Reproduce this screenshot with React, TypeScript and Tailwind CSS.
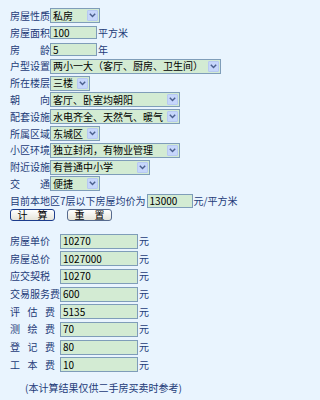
import React from "react";

const FONT = "font-['Noto_Sans_CJK_SC','Liberation_Sans',sans-serif]";

function Chevron() {
  return (
    <svg width="7" height="5" viewBox="0 0 7 5">
      <path d="M0.8 0.8 L3.5 3.6 L6.2 0.8" fill="none" stroke="#4a5f8c" strokeWidth="1.4" />
    </svg>
  );
}

function Sel({ value, className }: { value: string; className: string }) {
  return (
    <div className={`flex h-[15px] items-stretch border border-[#7f9db9] bg-[#d3ebd3] ${className}`}>
      <div className="flex flex-1 items-center overflow-hidden whitespace-nowrap pl-[2px] text-[10px] leading-none text-black">
        {value}
      </div>
      <div className="m-[1px] flex w-[11px] items-center justify-center rounded-[1px] border border-[#b7c9f2] bg-[#c6d6fb]">
        <Chevron />
      </div>
    </div>
  );
}

function Inp({ value, className }: { value: string; className: string }) {
  return (
    <div
      className={`flex items-center border border-[#7f9db9] bg-[#d3ebd3] pl-[2px] text-[10px] leading-none text-black ${className}`}
    >
      {value}
    </div>
  );
}

function Label({ text, spread }: { text: string; spread?: boolean }) {
  if (spread) {
    return (
      <div className="flex w-[40px] justify-between">
        {text.split("").map((c, i) => (
          <span key={i}>{c}</span>
        ))}
      </div>
    );
  }
  return <div className="w-[40px] whitespace-nowrap">{text}</div>;
}

function Row({ children }: { children: React.ReactNode }) {
  return <div className="flex h-[16.8px] items-center">{children}</div>;
}

function RLabel({ text, spread }: { text: string; spread?: boolean }) {
  if (spread) {
    return (
      <div className="w-[50px]">
        <div className="flex w-[45px] justify-between">
          {text.split("").map((c, i) => (
            <span key={i}>{c}</span>
          ))}
        </div>
      </div>
    );
  }
  return <div className="w-[50px] whitespace-nowrap">{text}</div>;
}

function RRow({ label, value, spread }: { label: string; value: string; spread?: boolean }) {
  return (
    <div className="flex h-[17.7px] items-center">
      <RLabel text={label} spread={spread} />
      <Inp value={value} className="h-[15px] w-[78px]" />
      <span className="ml-[1px]">元</span>
    </div>
  );
}

export default function App() {
  return (
    <div
      className={`min-h-screen w-full bg-[#e9f4fe] pl-[10px] pt-[7.6px] text-[10px] leading-none text-[#1d3b78] ${FONT}`}
    >
      <Row>
        <Label text="房屋性质" />
        <Sel value="私房" className="w-[50px]" />
      </Row>
      <Row>
        <Label text="房屋面积" />
        <Inp value="100" className="h-[13px] w-[47px]" />
        <span className="ml-[1px]">平方米</span>
      </Row>
      <Row>
        <Label text="房龄" spread />
        <Inp value="5" className="h-[13px] w-[47px]" />
        <span className="ml-[1px]">年</span>
      </Row>
      <Row>
        <Label text="户型设置" />
        <Sel value="两小一大（客厅、厨房、卫生间）" className="w-[171px]" />
      </Row>
      <Row>
        <Label text="所在楼层" />
        <Sel value="三楼" className="w-[40px]" />
      </Row>
      <Row>
        <Label text="朝向" spread />
        <Sel value="客厅、卧室均朝阳" className="w-[130px]" />
      </Row>
      <Row>
        <Label text="配套设施" />
        <Sel value="水电齐全、天然气、暖气" className="w-[130px]" />
      </Row>
      <Row>
        <Label text="所属区域" />
        <Sel value="东城区" className="w-[50px]" />
      </Row>
      <Row>
        <Label text="小区环境" />
        <Sel value="独立封闭，有物业管理" className="w-[130px]" />
      </Row>
      <Row>
        <Label text="附近设施" />
        <Sel value="有普通中小学" className="w-[100px]" />
      </Row>
      <Row>
        <Label text="交通" spread />
        <Sel value="便捷" className="w-[50px]" />
      </Row>
      <Row>
        <span className="whitespace-nowrap">目前本地区7层以下房屋均价为</span>
        <Inp value="13000" className="ml-[1px] h-[14px] w-[46px]" />
        <span className="ml-[1px] whitespace-nowrap">元/平方米</span>
      </Row>
      <div className="flex h-[12px] items-stretch gap-[12px]">
        <button className="flex w-[45px] items-center justify-center rounded-[3px] border border-[#1c3c8c] bg-gradient-to-b from-white to-[#e6e4da] text-[10px] leading-none text-black">
          计　算
        </button>
        <button className="flex w-[45px] items-center justify-center rounded-[3px] border border-[#566a8e] bg-gradient-to-b from-white to-[#e6e4da] text-[10px] leading-none text-black">
          重　置
        </button>
      </div>
      <div className="mt-[11px]">
        <RRow label="房屋单价" value="10270" />
        <RRow label="房屋总价" value="1027000" />
        <RRow label="应交契税" value="10270" />
        <RRow label="交易服务费" value="600" />
        <RRow label="评估费" value="5135" spread />
        <RRow label="测绘费" value="70" spread />
        <RRow label="登记费" value="80" spread />
        <RRow label="工本费" value="10" spread />
      </div>
      <div className="mt-[8.3px] flex h-[12px] items-center pl-[15px]">
        (本计算结果仅供二手房买卖时参考)
      </div>
    </div>
  );
}
